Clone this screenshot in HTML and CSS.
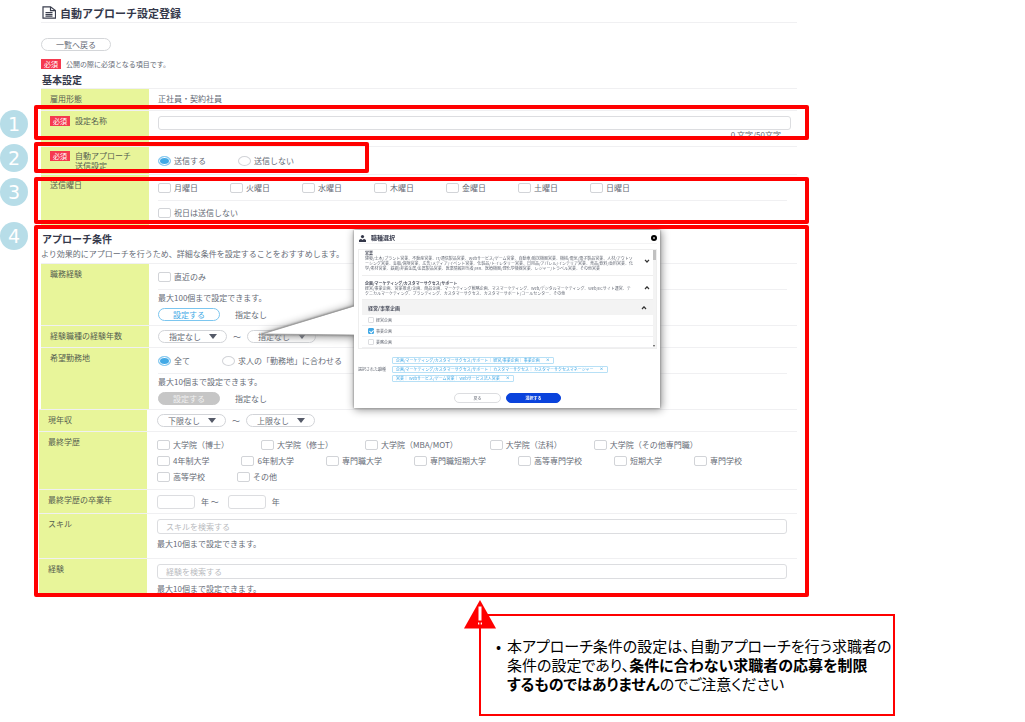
FILE: index.html
```html
<!DOCTYPE html>
<html lang="ja">
<head>
<meta charset="utf-8">
<title>自動アプローチ設定登録</title>
<link rel="stylesheet" href="styles.css">
</head>
<body>
<main class="page">
  <header class="title">
    <svg class="title-icon" viewBox="0 0 14 13" aria-hidden="true"><path d="M1 .8h7.500l5 3.800v7.600H1z M8.500 .8v3.800h5 M3.500 6.500h7 M3.500 8.300h7 M3.500 10.100h7"/></svg>
    <h1>自動アプローチ設定登録</h1>
  </header>
  <button class="pill back" type="button">一覧へ戻る</button>
  <p class="required-note"><span class="badge">必須</span>公開の際に必須となる項目です。</p>

  <h2>基本設定</h2>
  <div class="rows">
    <div class="row">
      <div class="head">雇用形態</div>
      <div class="cell plain">正社員・契約社員</div>
    </div>
    <div class="row">
      <div class="head"><span class="badge">必須</span><label for="name">設定名称</label></div>
      <div class="cell plain">
        <input class="text" id="name" type="text">
        <div class="counter">0 文字/50文字</div>
      </div>
      <span class="frame frame-1"></span><span class="mark mark-1">1</span>
    </div>
    <div class="row" role="radiogroup" aria-labelledby="send-label">
      <div class="head tight"><span class="badge">必須</span><span id="send-label">自動アプローチ<br>送信設定</span></div>
      <div class="cell options middle">
        <label class="option"><input type="radio" name="send" checked>送信する</label>
        <label class="option"><input type="radio" name="send">送信しない</label>
      </div>
      <span class="frame frame-2"></span><span class="mark mark-2">2</span>
    </div>
    <div class="row last">
      <div class="head">送信曜日</div>
      <div class="cell">
        <div class="options upper">
          <label class="option"><input type="checkbox">月曜日</label>
          <label class="option"><input type="checkbox">火曜日</label>
          <label class="option"><input type="checkbox">水曜日</label>
          <label class="option"><input type="checkbox">木曜日</label>
          <label class="option"><input type="checkbox">金曜日</label>
          <label class="option"><input type="checkbox">土曜日</label>
          <label class="option"><input type="checkbox">日曜日</label>
        </div>
        <div class="options holiday"><label class="option"><input type="checkbox">祝日は送信しない</label></div>
      </div>
      <span class="frame frame-3"></span><span class="mark mark-3">3</span>
    </div>
  </div>

  <section class="conditions">
    <h2>アプローチ条件</h2>
    <p class="lead">より効果的にアプローチを行うため、詳細な条件を設定することをおすすめします。</p>
    <div class="rows">
      <div class="row">
        <div class="head">職務経験</div>
        <div class="cell">
          <div class="options upper"><label class="option"><input type="checkbox">直近のみ</label></div>
          <p class="limit">最大100個まで設定できます。</p>
          <div class="setting"><button class="pill set" type="button">設定する</button>指定なし</div>
        </div>
      </div>
      <div class="row">
        <div class="head">経験職種の経験年数</div>
        <div class="cell range">
          <span class="select"><select aria-label="経験年数の下限"><option>指定なし</option></select></span>～
          <span class="select"><select aria-label="経験年数の上限"><option>指定なし</option></select></span>
        </div>
      </div>
      <div class="row">
        <div class="head">希望勤務地</div>
        <div class="cell">
          <div class="options upper">
            <label class="option"><input type="radio" name="place" checked>全て</label>
            <label class="option"><input type="radio" name="place">求人の「勤務地」に合わせる</label>
          </div>
          <p class="limit">最大10個まで設定できます。</p>
          <div class="setting"><button class="pill set" type="button" disabled>設定する</button>指定なし</div>
        </div>
      </div>
    </div>
    <div class="rows lower">
      <div class="row">
        <div class="head">現年収</div>
        <div class="cell range">
          <span class="select"><select aria-label="年収の下限"><option>下限なし</option></select></span>～
          <span class="select"><select aria-label="年収の上限"><option>上限なし</option></select></span>
        </div>
      </div>
      <div class="row">
        <div class="head">最終学歴</div>
        <div class="cell schools">
          <div class="options">
            <label class="option"><input type="checkbox">大学院（博士）</label>
            <label class="option"><input type="checkbox">大学院（修士）</label>
            <label class="option"><input type="checkbox">大学院（MBA/MOT）</label>
            <label class="option"><input type="checkbox">大学院（法科）</label>
            <label class="option"><input type="checkbox">大学院（その他専門職）</label>
          </div>
          <div class="options">
            <label class="option"><input type="checkbox">4年制大学</label>
            <label class="option"><input type="checkbox">6年制大学</label>
            <label class="option"><input type="checkbox">専門職大学</label>
            <label class="option"><input type="checkbox">専門職短期大学</label>
            <label class="option"><input type="checkbox">高等専門学校</label>
            <label class="option"><input type="checkbox">短期大学</label>
            <label class="option"><input type="checkbox">専門学校</label>
          </div>
          <div class="options">
            <label class="option"><input type="checkbox">高等学校</label>
            <label class="option"><input type="checkbox">その他</label>
          </div>
        </div>
      </div>
      <div class="row">
        <div class="head">最終学歴の卒業年</div>
        <div class="cell years">
          <input class="text year" type="text" aria-label="卒業年の開始"><span>年 ～</span>
          <input class="text year" type="text" aria-label="卒業年の終了"><span>年</span>
        </div>
      </div>
      <div class="row">
        <div class="head"><label for="skill">スキル</label></div>
        <div class="cell search">
          <input class="text" id="skill" type="text" placeholder="スキルを検索する">
          <p>最大10個まで設定できます。</p>
        </div>
      </div>
      <div class="row last">
        <div class="head"><label for="career">経験</label></div>
        <div class="cell search final">
          <input class="text" id="career" type="text" placeholder="経験を検索する">
          <p>最大10個まで設定できます。</p>
        </div>
      </div>
    </div>

    <div class="popup" role="dialog" aria-label="職種選択">
      <svg class="pointer" viewBox="0 0 93 32" aria-hidden="true"><path class="pointer-fill" d="M93 1 0 29 93 30z"/><path class="pointer-edge" d="M92 1 0 29 92 30"/></svg>
      <div class="dialog">
        <div class="dialog-head">
          <svg class="person" viewBox="0 0 7 7" aria-hidden="true"><circle cx="3.500" cy="1.600" r="1.600"/><path d="M0 7V5l2-1.300 1.500 1.300L5 3.700 7 5v2z"/></svg>
          <h3>職種選択</h3>
          <button class="close" type="button" aria-label="閉じる"><svg viewBox="0 0 6 6" aria-hidden="true"><circle cx="3" cy="3" r="3"/><path d="M2.200 2.200 3.800 3.800M3.800 2.200 2.200 3.800"/></svg></button>
        </div>
        <div class="list">
          <div class="groups">
            <div class="group first">
              <div><h4>営業</h4>
              <p>建築/土木/プラント営業、不動産営業、IT/通信製品営業、Webサービス/ゲーム営業、自動車/輸送機器営業、機械/電気/電子製品営業、人材/アウトソ<br>ーシング営業、金融/保険営業、広告/メディア/イベント営業、化粧品/トイレタリー営業、日用品/アパレル/インテリア営業、食品/飲料/香料営業、化<br>学/素材営業、鉄鋼/非鉄金属/金属製品営業、医薬情報担当者/MR、医療機器/理化学機器営業、レジャー/トラベル営業、その他営業</p></div>
              <svg class="chevron" viewBox="0 0 6 4" aria-hidden="true"><path d="M1 .8 3 3 5 .8"/></svg>
            </div>
            <div class="group second">
              <div><h4>企画/マーケティング/カスタマーサクセス/サポート</h4>
              <p>経営/事業企画、営業推進/企画、商品企画、マーケティング戦略企画、マスマーケティング、Web/デジタルマーケティング、Web/ECサイト運営、テ<br>クニカルマーケティング、ブランディング、カスタマーサクセス、カスタマーサポート/コールセンター、その他</p></div>
              <svg class="chevron" viewBox="0 0 6 4" aria-hidden="true"><path d="M1 3 3 .8 5 3"/></svg>
            </div>
            <div class="band"><h4>経営/事業企画</h4><svg class="chevron" viewBox="0 0 6 4" aria-hidden="true"><path d="M1 3 3 .8 5 3"/></svg></div>
            <label class="choice"><input type="checkbox">経営企画</label>
            <label class="choice"><input type="checkbox" checked>事業企画</label>
            <label class="choice"><input type="checkbox">業務企画</label>
          </div>
          <div class="scrollbar"><span class="thumb"></span><span class="arrow">▾</span></div>
        </div>
        <div class="selected">
          <span>選択された職種</span>
          <div class="chips">
            <span class="chip">企画/マーケティング/カスタマーサクセス/サポート｜ 経営/事業企画｜ 事業企画<b>×</b></span>
            <span class="chip">企画/マーケティング/カスタマーサクセス/サポート｜ カスタマーサクセス｜ カスタマーサクセスマネージャー<b>×</b></span>
            <span class="chip">営業｜ Webサービス/ゲーム営業｜ Webサービス法人営業<b>×</b></span>
          </div>
        </div>
        <div class="actions">
          <button class="action" type="button">戻る</button>
          <button class="action primary" type="button">選択する</button>
        </div>
      </div>
    </div>
    <span class="frame frame-4"></span><span class="mark mark-4">4</span>
  </section>
</main>
<aside class="notice">
  <svg class="warning" viewBox="0 0 32 29" aria-hidden="true"><path class="warning-body" d="M16 0 32 28.500H0z"/><path class="warning-mark" d="M14.500 6.500h3v14h-3z M14 22.500h1.300v2H14z M16.700 22.500H18v2h-1.300z"/></svg>
  <ul>
    <li>本アプローチ条件の設定は、自動アプローチを行う求職者の<br>条件の設定であり、<strong>条件に合わない求職者の応募を制限<br>するものではありません</strong>のでご注意ください</li>
  </ul>
</aside>
</body>
</html>
```
FILE: styles.css
```css
* { box-sizing: border-box; }
body, h1, h2, h3, h4, p, ul { margin: 0; padding: 0; }
body {
  background: #fff;
  color: #666b76;
  font: 8px/10px "Noto Sans CJK JP", sans-serif;
  white-space: nowrap;
}
input, select, button { margin: 0; font: inherit; color: inherit; }
.page { margin: 0 228px 0 41px; }

.title {
  display: flex;
  align-items: center;
  gap: 4px;
  height: 23px;
  padding: 3px 0 0 1px;
  border-bottom: 1px solid #f0f0f2;
}
.title-icon { width: 14px; height: 13px; fill: none; stroke: #3a3e4e; stroke-width: 1.2; }
h1 { color: #34384a; font-size: 11px; line-height: 14px; }
h2 { padding-left: 1px; color: #34384a; font-size: 10px; line-height: 12px; }

.pill {
  display: flex;
  align-items: center;
  justify-content: center;
  height: 13px;
  padding: 0;
  border: 1px solid #d4d6d9;
  border-radius: 7px;
  background: #fff;
}
.back { width: 70px; margin-top: 15px; }
.required-note { display: flex; gap: 5px; margin: 8px 0 5px; font-size: 7px; }
.badge {
  flex: none;
  width: 20px;
  height: 10px;
  background: #f5394f;
  color: #fff;
  font-size: 7px;
  line-height: 10px;
  text-align: center;
}

.rows { margin-top: 2px; border-top: 1px solid #f0f0f2; }
.row {
  position: relative;
  display: grid;
  grid-template-columns: 108px 1fr;
  border-bottom: 1px solid #f0f0f2;
}
.row.last { border-bottom: 0; }
.head { display: flex; gap: 5px; padding: 5px 0 0 9px; background: #e8f59a; color: #565e50; }
.head.tight { padding: 4px 0 3px 9px; }
.cell { padding: 0 6px 0 9px; }
.cell.plain { padding-top: 5px; padding-bottom: 6px; }

.text {
  display: block;
  width: 100%;
  height: 14px;
  padding: 0 8px;
  border: 1px solid #dcdde0;
  border-radius: 3px;
  background: #fff;
}
.text::placeholder { color: #b9bbc0; opacity: 1; }
.counter { padding-right: 10px; text-align: right; }

.options { display: flex; gap: 32px; }
.options.middle { align-items: center; }
.option { display: flex; align-items: center; gap: 3px; height: 10px; }
.option input { appearance: none; width: 13px; height: 10px; border: 1px solid #d2d4d8; border-radius: 2px; background: #fff; }
.option input[type="radio"] { border-radius: 50%; }
.option input[type="radio"]:checked { border-color: #8fccf0; background: #42a9e6; box-shadow: inset 0 0 0 1px #fff; }
.options.upper { margin-right: 4px; padding: 8px 0 7px; border-bottom: 1px solid #f0f0f2; }
.holiday { padding: 7px 0; }

.limit { padding-top: 3px; }
.setting { display: flex; align-items: center; gap: 15px; padding: 5px 0 4px; }
.set { width: 62px; border-color: #7cc6ef; color: #42a9e6; }
.set:disabled { border-color: #c6c6c6; background: #c6c6c6; color: #f1f1f1; }

.range { display: flex; align-items: center; gap: 6px; padding-top: 4px; padding-bottom: 4px; }
.select { position: relative; }
.select select {
  appearance: none;
  display: block;
  width: 69px;
  height: 13px;
  padding: 0 10px;
  border: 1px solid #d2d4d8;
  border-radius: 7px;
  background: #fff;
}
.select::after {
  content: "";
  position: absolute;
  top: 4px;
  right: 10px;
  border: 4px solid transparent;
  border-top: 5px solid #555a68;
  border-bottom: 0;
}

.conditions { position: relative; padding-top: 8px; }
.lead { margin: 4px 0; }
.conditions .rows { margin-top: 0; }
.conditions .lower { margin: -1px 0 0 -2px; }
.lower .cell { padding-right: 10px; padding-left: 10px; }
.schools { display: grid; gap: 6px; padding-top: 8px; padding-bottom: 7px; }
.years { display: flex; align-items: center; gap: 6px; padding-top: 5px; padding-bottom: 4px; }
.years .year { width: 38px; }
.years span + .year { margin-left: 3px; }
.search { padding-top: 5px; padding-bottom: 9px; }
.search.final { padding-bottom: 0; }
.search .text { height: 15px; margin-bottom: 5px; }

/* numbered annotations */
.frame { position: absolute; right: -12px; left: -7px; border: 4px solid #f00; border-radius: 2px; pointer-events: none; }
.mark {
  position: absolute;
  left: -41px;
  width: 28px;
  height: 28px;
  border-radius: 50%;
  background: #b7dde8;
  color: #fff;
  font: 19px/28px "DejaVu Sans", sans-serif;
  text-align: center;
}
.frame-1 { top: -6px; bottom: 6px; }
.frame-2 { top: -5px; right: auto; bottom: 1px; width: 335px; }
.frame-3 { top: 2px; bottom: 1px; }
.frame-4 { top: 0; bottom: -3px; }
.mark-1 { top: -1px; }
.mark-2 { top: -3px; }
.mark-3 { top: 3px; }
.mark-4 { top: -3px; }

/* job type dialog */
.popup { position: absolute; top: 5px; left: 313px; width: 306px; filter: drop-shadow(0 0 1px #777) drop-shadow(1px 1px 4px #888); }
.pointer { position: absolute; top: 75px; left: -92px; width: 93px; height: 32px; }
.pointer-fill { fill: #fff; }
.pointer-edge { fill: none; stroke: #999; stroke-width: .8; }
.dialog { height: 178px; padding: 3px 3px 0 4px; background: #fff; font-size: 4px; line-height: 5px; }
.dialog-head { display: flex; align-items: center; gap: 5px; height: 11px; padding-left: 1px; border-bottom: 1px solid #f3f3f4; }
.dialog-head h3 { color: #34384a; font-size: 6px; line-height: 8px; }
.person { width: 7px; height: 7px; fill: #34384a; }
.close { display: flex; width: 6px; height: 6px; margin-left: auto; padding: 0; border: 0; background: none; }
.close path { stroke: #fff; stroke-width: .7; }
.list { display: flex; height: 100px; margin-top: 5px; border: 1px solid #eee; overflow: hidden; }
.groups { flex: 1; padding-left: 3px; }
.group { display: flex; align-items: center; justify-content: space-between; padding: 4px 3px; border-bottom: 1px solid #eee; }
.group.first { padding-top: 0; }
.group.second { padding-bottom: 3px; }
.group h4, .band h4 { color: #4c505e; font-size: 4px; line-height: 6px; }
.band h4 { font-size: 5px; }
.chevron { width: 6px; height: 4px; fill: none; stroke: #333; stroke-width: 1.2; }
.band { display: flex; align-items: center; justify-content: space-between; height: 15px; padding: 0 6px; background: #f3f3f3; }
.choice { display: flex; align-items: center; gap: 2px; height: 11px; padding-left: 6px; border-bottom: 1px solid #f0f0f2; }
.choice input { appearance: none; width: 6px; height: 6px; border: 1px solid #dcdde0; border-radius: 1px; }
.choice input:checked { border-color: #42a9e6; background: #42a9e6; position: relative; }
.choice input:checked::after { content: ""; position: absolute; top: 0; left: 1px; width: 2px; height: 3px; border: solid #fff; border-width: 0 1px 1px 0; transform: rotate(45deg); }
.scrollbar { display: flex; flex-direction: column; justify-content: space-between; width: 3px; background: #f3f3f3; }
.thumb { height: 10px; background: #c1c1c1; }
.arrow { color: #555; }
.selected { display: flex; align-items: center; gap: 5px; margin-top: 8px; }
.selected > span { width: 29px; }
.chips { display: grid; justify-items: start; gap: 2px; }
.chip { display: flex; gap: 6px; height: 7px; padding: 0 3px; border: 1px solid #b7e0f6; border-radius: 1px; color: #42a9e6; }
.actions { display: flex; gap: 5px; margin: 11px 0 0 96px; }
.action { width: 47px; height: 10px; padding: 0; border: 1px solid #dcdde0; border-radius: 5px; background: #fff; line-height: 8px; }
.primary { width: 55px; border-color: #0a43dc; background: #0a43dc; color: #fff; font-weight: bold; }

/* caution */
.notice {
  position: relative;
  max-width: 416px;
  margin: 20px 130px 0 auto;
  padding: 20px 0 21px 26px;
  border: 2px solid #f00;
  color: #000;
  font-size: 15px;
  line-height: 19px;
  font-feature-settings: "palt";
}
.notice ul { list-style: none; }
.notice li { position: relative; }
.notice li::before { content: "•"; position: absolute; left: -11px; }
.warning { position: absolute; top: -16px; left: -17px; width: 32px; height: 29px; }
.warning-body { fill: #f00; }
.warning-mark { fill: #fff; }
```
